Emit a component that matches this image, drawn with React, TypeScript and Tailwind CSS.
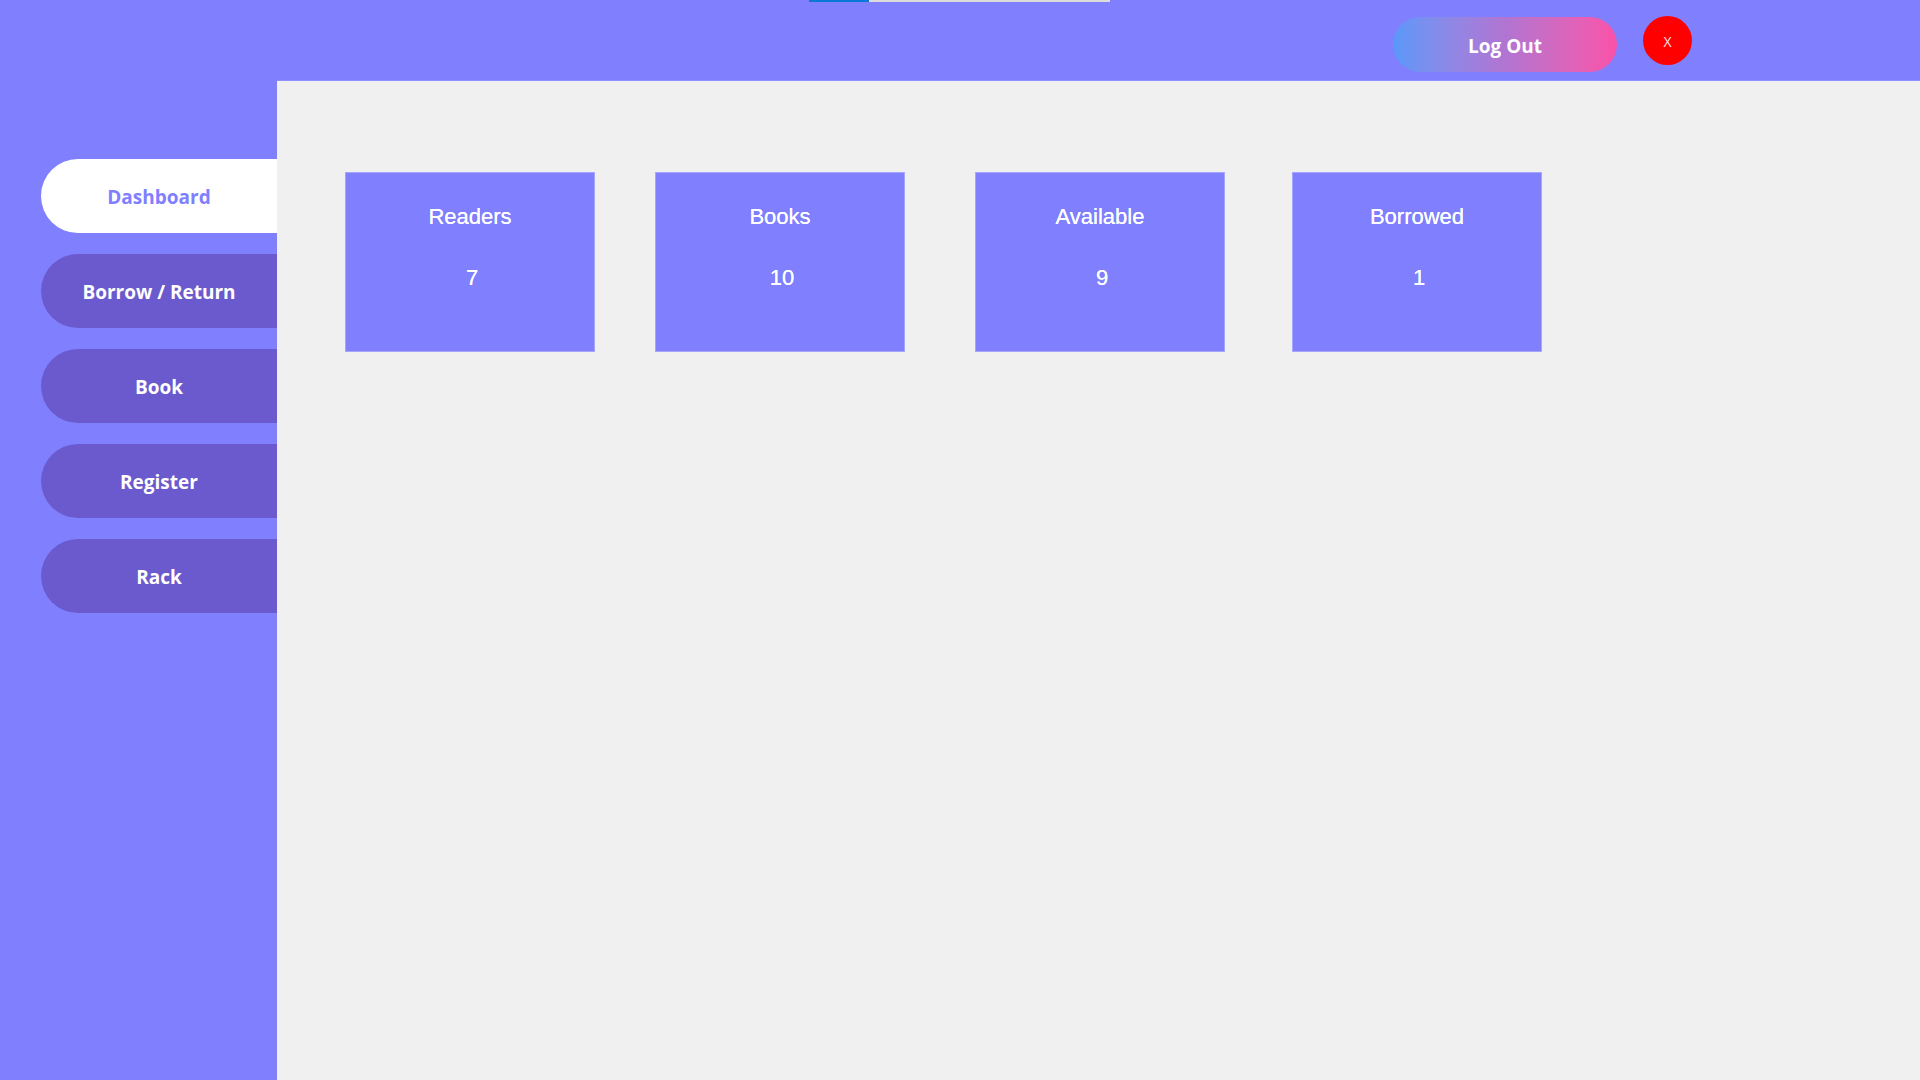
import React from "react";

const navItems = ["Dashboard", "Borrow / Return", "Book", "Register", "Rack"];

const cards = [
  { title: "Readers", value: "7", ml: "ml-[68px]" },
  { title: "Books", value: "10", ml: "ml-[60px]" },
  { title: "Available", value: "9", ml: "ml-[70px]" },
  { title: "Borrowed", value: "1", ml: "ml-[67px]" },
];

export default function App() {
  return (
    <div className="w-full h-screen bg-[#8080ff] flex flex-col overflow-hidden" style={{ fontFamily: '"Open Sans", "Noto Sans", sans-serif' }}>
      <header className="relative h-[80px] shrink-0 flex justify-end items-start pr-[228px]">
        <div className="absolute top-0 left-[809px] w-[301px] h-[2px] bg-[#dcdcdc]">
          <div className="w-[60px] h-full bg-[#0a78d7]" />
        </div>
        <button className="mt-[17px] w-[224px] h-[55px] rounded-full bg-gradient-to-r from-[#5898fa] via-[#b174d2] to-[#fa51a8] text-white font-bold text-[19px] leading-none flex items-center justify-center pt-[4px]">
          Log Out
        </button>
        <button className="mt-[16px] ml-[26px] w-[49px] h-[49px] rounded-full bg-[#ff0000] text-[#ffe4e4] text-[14px] leading-none flex items-center justify-center pt-[2px]">
          X
        </button>
      </header>
      <div className="flex flex-1 min-h-0">
        <nav className="w-[277px] shrink-0 pt-[79px] pl-[41px] flex flex-col gap-[21px]">
          {navItems.map((item, i) => (
            <div
              key={item}
              className={`h-[74px] rounded-l-full flex items-center justify-center font-bold text-[19px] pt-[3px] ${
                i === 0 ? "bg-white text-[#7f7fff]" : "bg-[#6a5acd] text-white"
              }`}
            >
              {item}
            </div>
          ))}
        </nav>
        <main className="flex-1 bg-[#f0f0f0] border-t border-[#9090ff]">
          <div className="flex pt-[91px]">
            {cards.map((c) => (
              <div
                key={c.title}
                className={`${c.ml} w-[250px] h-[180px] bg-[#8080ff] border border-[#a6a6ff] flex flex-col items-center text-white [text-shadow:0_0_0.6px_#ffffff]`}
                style={{ fontFamily: '"Liberation Sans", Arial, sans-serif' }}
              >
                <div className="mt-[30px] text-[22px] leading-[28px]">{c.title}</div>
                <div className="mt-[33px] text-[22px] leading-[28px] pl-[4px]">{c.value}</div>
              </div>
            ))}
          </div>
        </main>
      </div>
    </div>
  );
}
